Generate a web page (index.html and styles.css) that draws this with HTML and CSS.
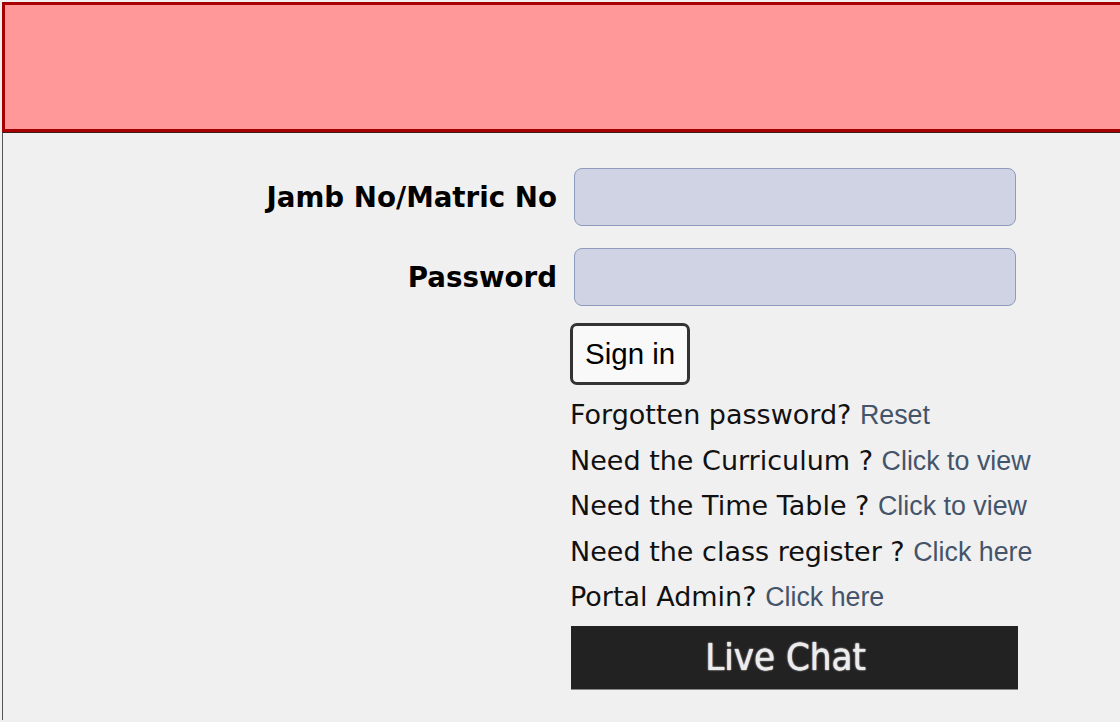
FILE: index.html
```html
<!DOCTYPE html>
<html>
<head>
<meta charset="utf-8">
<title>Student Portal Login</title>
<link rel="stylesheet" href="styles.css">
</head>
<body>
<div class="page">
  <header class="banner"></header>
  <main class="content">
    <form class="login">
      <label class="label" for="jamb">Jamb No/Matric No</label>
      <div class="field"><input id="jamb" class="input" type="text"></div>
      <label class="label" for="pass">Password</label>
      <div class="field"><input id="pass" class="input" type="password"></div>
      <div class="actions">
        <button type="button" class="signin">Sign in</button>
        <ul class="links">
          <li>Forgotten password? <a href="#">Reset</a></li>
          <li>Need the Curriculum ? <a href="#">Click to view</a></li>
          <li>Need the Time Table ? <a href="#">Click to view</a></li>
          <li>Need the class register ? <a href="#">Click here</a></li>
          <li>Portal Admin? <a href="#">Click here</a></li>
        </ul>
        <div class="livechat"><span>Live Chat</span></div>
      </div>
    </form>
  </main>
</div>
</body>
</html>
```
FILE: styles.css
```css
html, body {
  margin: 0;
  padding: 0;
  background: #f0f0f0;
  overflow: hidden;
}
.page {
  margin: 2px 0 0 2px;
  width: 1118px;
  overflow: hidden;
}
.banner {
  display: block;
  width: 1130px;
  height: 124px;
  background: #ff9999;
  border: 3px solid #a80000;
  border-right: none;
}
.content {
  border-top: 1px solid #3a1a1a;
  border-left: 1px solid #555;
  height: 552px;
  padding-top: 35px;
}
.login {
  display: grid;
  grid-template-columns: 554px 1fr;
  column-gap: 13px;
  row-gap: 22px;
  align-items: center;
}
.label {
  text-align: right;
  font-family: "DejaVu Sans", Verdana, sans-serif;
  font-weight: bold;
  font-size: 27.7px;
  color: #000;
}
.field {
  display: flex;
}
.input {
  box-sizing: border-box;
  margin: 0 0 0 4px;
  width: 442px;
  height: 58px;
  background: #d0d3e4;
  border: 1px solid #8e9bbd;
  border-radius: 8px;
  outline: none;
}
.actions {
  grid-column: 2;
  margin-top: -5px;
}
.signin {
  display: block;
  box-sizing: border-box;
  height: 62px;
  padding: 0 12px;
  background: #f9f9f9;
  border: 3px solid #333;
  border-radius: 7px;
  font-family: "Liberation Sans", Arial, sans-serif;
  font-size: 29.5px;
  color: #000;
}
.links {
  list-style: none;
  margin: 7px 0 0 0;
  padding: 0;
  font-family: "DejaVu Sans", Verdana, sans-serif;
  font-size: 27px;
  color: #111;
  white-space: nowrap;
}
.links li {
  height: 45.5px;
  line-height: 45.5px;
}
.links a {
  font-family: "Liberation Sans", Arial, sans-serif;
  font-size: 26.8px;
  line-height: 1;
  color: #44546a;
  text-decoration: none;
}
.livechat {
  box-sizing: border-box;
  margin: 6px 0 0 1px;
  width: 447px;
  height: 64px;
  background: #222;
  border-bottom: 1px solid #888;
  display: flex;
  align-items: center;
  justify-content: center;
}
.livechat span {
  margin-right: 18px;
  font-family: "DejaVu Sans Condensed", "DejaVu Sans", sans-serif;
  font-stretch: condensed;
  font-size: 38px;
  color: #ececec;
  text-shadow: 0 0 1px #fff, 0 0 2px #bbb;
}
```
